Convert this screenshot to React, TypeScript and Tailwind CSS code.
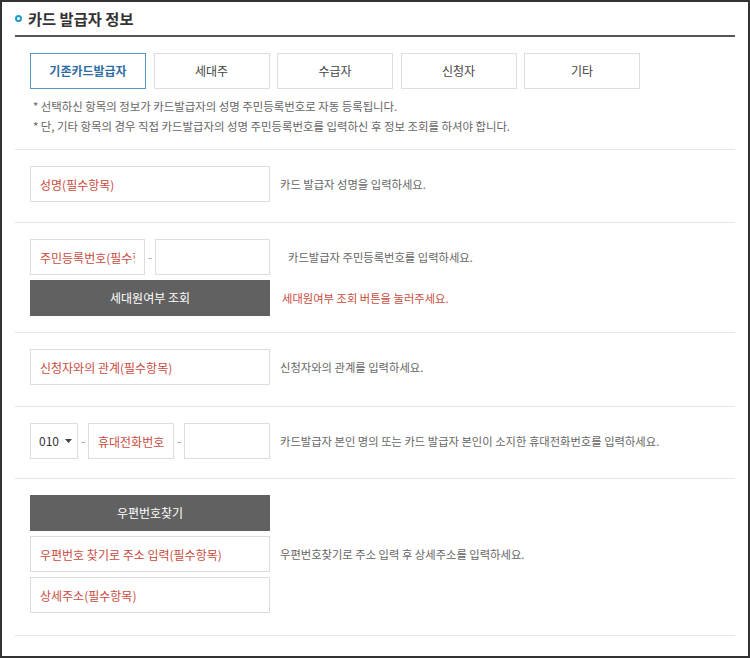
import React from "react"

const TABS = ["기존카드발급자", "세대주", "수급자", "신청자", "기타"]

const FONT = "font-['Noto_Sans_CJK_KR','Noto_Sans',sans-serif]"

// 빨간 placeholder 입력칸
function Field({ placeholder, className = "" }: { placeholder?: string; className?: string }) {
  return (
    <input
      type="text"
      placeholder={placeholder}
      className={`h-[36px] border border-[#dddddd] bg-white px-[9px] text-[12px] text-[#333] outline-none placeholder:text-[#c94b40] ${className}`}
    />
  )
}

function Dash() {
  return <span className="w-[10px] text-center text-[12px] text-[#999]">-</span>
}

function Help({ children, red = false, className = "" }: { children: React.ReactNode; red?: boolean; className?: string }) {
  return (
    <p className={`text-[11.3px] ${red ? "text-[#c94b40]" : "text-[#666]"} ${className}`}>{children}</p>
  )
}

function DarkButton({ children }: { children: React.ReactNode }) {
  return (
    <button className="h-[36px] w-[240px] bg-[#616161] text-[12px] text-white">{children}</button>
  )
}

export default function App() {
  return (
    <div className={`h-[658px] w-[750px] border-2 border-[#333] bg-white px-[13px] ${FONT}`}>
      {/* 제목 */}
      <div className="flex h-[33px] items-center gap-[6px]">
        <span className="h-[7px] w-[7px] rounded-full border-2 border-[#1e9bc6]" />
        <h2 className="text-[15.3px] font-bold text-[#333]">카드 발급자 정보</h2>
      </div>
      <div className="h-[2px] bg-[#555]" />

      {/* 발급자 구분 탭 */}
      <div className="flex gap-[7.5px] pl-[15px] pt-[16px]">
        {TABS.map((t, i) => (
          <button
            key={t}
            className={
              i === 0
                ? "h-[36px] w-[116px] border border-[#5b95c2] text-[12px] font-bold text-[#2e6da4]"
                : "h-[36px] w-[116px] border border-[#dddddd] text-[12px] text-[#444]"
            }
          >
            {t}
          </button>
        ))}
      </div>
      <div className="mt-[7px] pl-[18px] text-[11.4px] leading-[20px] text-[#666]">
        <p>* 선택하신 항목의 정보가 카드발급자의 성명 주민등록번호로 자동 등록됩니다.</p>
        <p>* 단, 기타 항목의 경우 직접 카드발급자의 성명 주민등록번호를 입력하신 후 정보 조회를 하셔야 합니다.</p>
      </div>

      {/* 성명 */}
      <div className="mt-[13px] flex items-center gap-[10px] border-t border-[#e6e6e6] pb-[20px] pl-[15px] pt-[16px]">
        <Field placeholder="성명(필수항목)" className="w-[240px]" />
        <Help>카드 발급자 성명을 입력하세요.</Help>
      </div>

      {/* 주민등록번호 */}
      <div className="flex border-t border-[#e6e6e6] pb-[16px] pl-[15px] pt-[16px]">
        <div className="flex w-[240px] flex-col gap-[5px]">
          <div className="flex items-center">
            <Field placeholder="주민등록번호(필수항목)" className="w-[115px]" />
            <Dash />
            <Field className="w-[115px]" />
          </div>
          <DarkButton>세대원여부 조회</DarkButton>
        </div>
        <div className="flex flex-col">
          <div className="flex h-[36px] items-center pl-[18px]">
            <Help>카드발급자 주민등록번호를 입력하세요.</Help>
          </div>
          <div className="mt-[5px] flex h-[36px] items-center pl-[12px]">
            <Help red>세대원여부 조회 버튼을 눌러주세요.</Help>
          </div>
        </div>
      </div>

      {/* 관계 */}
      <div className="flex items-center gap-[10px] border-t border-[#e6e6e6] pb-[21px] pl-[15px] pt-[16px]">
        <Field placeholder="신청자와의 관계(필수항목)" className="w-[240px]" />
        <Help>신청자와의 관계를 입력하세요.</Help>
      </div>

      {/* 휴대전화 */}
      <div className="flex items-center gap-[10px] border-t border-[#e6e6e6] pb-[19px] pl-[15px] pt-[16px]">
        <div className="flex w-[240px] items-center">
          <div className="flex h-[36px] w-[48px] items-center gap-[6px] border border-[#dddddd] pl-[8px] text-[12px] text-[#333]">
            010
            <svg width="7" height="4" viewBox="0 0 7 4">
              <path d="M0 0h7L3.5 4z" fill="#444" />
            </svg>
          </div>
          <Dash />
          <Field placeholder="휴대전화번호(필수항목)" className="w-[86px]" />
          <Dash />
          <Field className="w-[86px]" />
        </div>
        <Help>카드발급자 본인 명의 또는 카드 발급자 본인이 소지한 휴대전화번호를 입력하세요.</Help>
      </div>

      {/* 주소 */}
      <div className="flex border-y border-[#e6e6e6] pb-[22px] pl-[15px] pt-[16px]">
        <div className="flex w-[240px] flex-col gap-[5px]">
          <DarkButton>우편번호찾기</DarkButton>
          <Field placeholder="우편번호 찾기로 주소 입력(필수항목)" />
          <Field placeholder="상세주소(필수항목)" />
        </div>
        <div className="mt-[41px] flex h-[36px] items-center self-start pl-[10px]">
          <Help>우편번호찾기로 주소 입력 후 상세주소를 입력하세요.</Help>
        </div>
      </div>
    </div>
  )
}
